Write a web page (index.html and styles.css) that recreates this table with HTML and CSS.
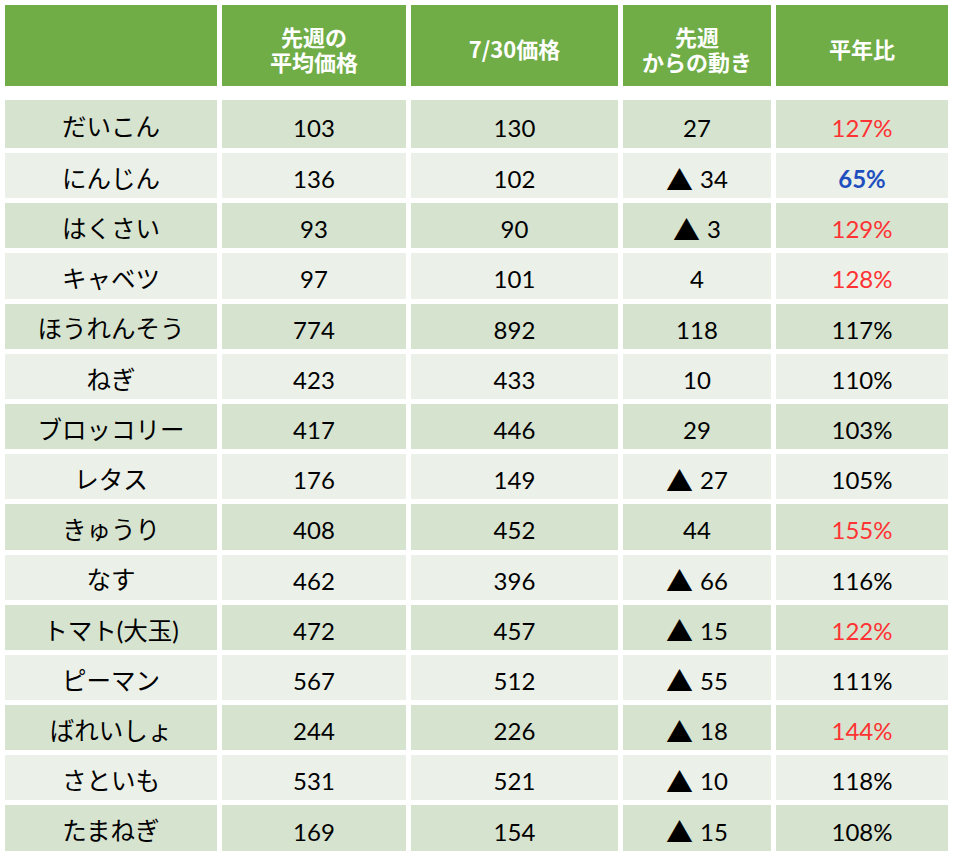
FILE: index.html
```html
<!DOCTYPE html>
<html lang="ja">
<head>
<meta charset="utf-8">
<link rel="stylesheet" href="styles.css">
</head>
<body>
<div class="sheet">
  <div class="head">
    <div class="hc"></div>
    <div class="hc"><span class="hl">先週の</span><span class="hl">平均価格</span></div>
    <div class="hc"><span class="hl">7/30価格</span></div>
    <div class="hc"><span class="hl">先週</span><span class="hl">からの動き</span></div>
    <div class="hc"><span class="hl">平年比</span></div>
  </div>
  <div class="body">
    <div class="c d nm">だいこん</div><div class="c d">103</div><div class="c d">130</div><div class="c d">27</div><div class="c d red">127%</div>
    <div class="c l nm">にんじん</div><div class="c l">136</div><div class="c l">102</div><div class="c l"><span class="tri">▲</span> 34</div><div class="c l blue">65%</div>
    <div class="c d nm">はくさい</div><div class="c d">93</div><div class="c d">90</div><div class="c d"><span class="tri">▲</span> 3</div><div class="c d red">129%</div>
    <div class="c l nm">キャベツ</div><div class="c l">97</div><div class="c l">101</div><div class="c l">4</div><div class="c l red">128%</div>
    <div class="c d nm">ほうれんそう</div><div class="c d">774</div><div class="c d">892</div><div class="c d">118</div><div class="c d">117%</div>
    <div class="c l nm">ねぎ</div><div class="c l">423</div><div class="c l">433</div><div class="c l">10</div><div class="c l">110%</div>
    <div class="c d nm">ブロッコリー</div><div class="c d">417</div><div class="c d">446</div><div class="c d">29</div><div class="c d">103%</div>
    <div class="c l nm">レタス</div><div class="c l">176</div><div class="c l">149</div><div class="c l"><span class="tri">▲</span> 27</div><div class="c l">105%</div>
    <div class="c d nm">きゅうり</div><div class="c d">408</div><div class="c d">452</div><div class="c d">44</div><div class="c d red">155%</div>
    <div class="c l nm">なす</div><div class="c l">462</div><div class="c l">396</div><div class="c l"><span class="tri">▲</span> 66</div><div class="c l">116%</div>
    <div class="c d nm">トマト(大玉)</div><div class="c d">472</div><div class="c d">457</div><div class="c d"><span class="tri">▲</span> 15</div><div class="c d red">122%</div>
    <div class="c l nm">ピーマン</div><div class="c l">567</div><div class="c l">512</div><div class="c l"><span class="tri">▲</span> 55</div><div class="c l">111%</div>
    <div class="c d nm">ばれいしょ</div><div class="c d">244</div><div class="c d">226</div><div class="c d"><span class="tri">▲</span> 18</div><div class="c d red">144%</div>
    <div class="c l nm">さといも</div><div class="c l">531</div><div class="c l">521</div><div class="c l"><span class="tri">▲</span> 10</div><div class="c l">118%</div>
    <div class="c d nm">たまねぎ</div><div class="c d">169</div><div class="c d">154</div><div class="c d"><span class="tri">▲</span> 15</div><div class="c d">108%</div>
  </div>
</div>
</body>
</html>
```

FILE: styles.css
```css
html, body {
  margin: 0;
  padding: 0;
  background: #ffffff;
}

body {
  padding: 5px;
  font-family: "Lato", "Noto Sans CJK JP", sans-serif;
  color: #000000;
}

.sheet {
  display: flex;
  flex-direction: column;
  gap: 14px;
}

.head,
.body {
  display: grid;
  grid-template-columns: 212px 184px 207px 148px 172px;
  column-gap: 5px;
}

.head {
  grid-template-rows: 81px;
}

.hc {
  background: #70ad47;
  color: #ffffff;
  font-family: "Noto Sans CJK JP", sans-serif;
  font-weight: 700;
  font-size: 22px;
  display: flex;
  flex-direction: column;
  align-items: center;
  justify-content: center;
  text-align: center;
  padding-top: 6px;
  box-sizing: border-box;
}

.hl {
  display: block;
  line-height: 25px;
  height: 25px;
  white-space: nowrap;
}

.body {
  grid-template-rows: 48px repeat(14, 45.2px);
  row-gap: 5px;
}

.c {
  display: flex;
  align-items: center;
  justify-content: center;
  font-size: 24px;
  line-height: 1;
  padding-top: 7px;
  box-sizing: border-box;
  white-space: nowrap;
}

.nm {
  font-size: 24.5px;
}

.d {
  background: #d6e3cf;
}

.l {
  background: #ebf0e8;
}

.red {
  color: #ff3333;
}

.blue {
  color: #1f4fbf;
  font-weight: 700;
}

.tri {
  font-family: "Noto Sans CJK JP", sans-serif;
  font-size: 27px;
  margin-right: 7px;
}
```
